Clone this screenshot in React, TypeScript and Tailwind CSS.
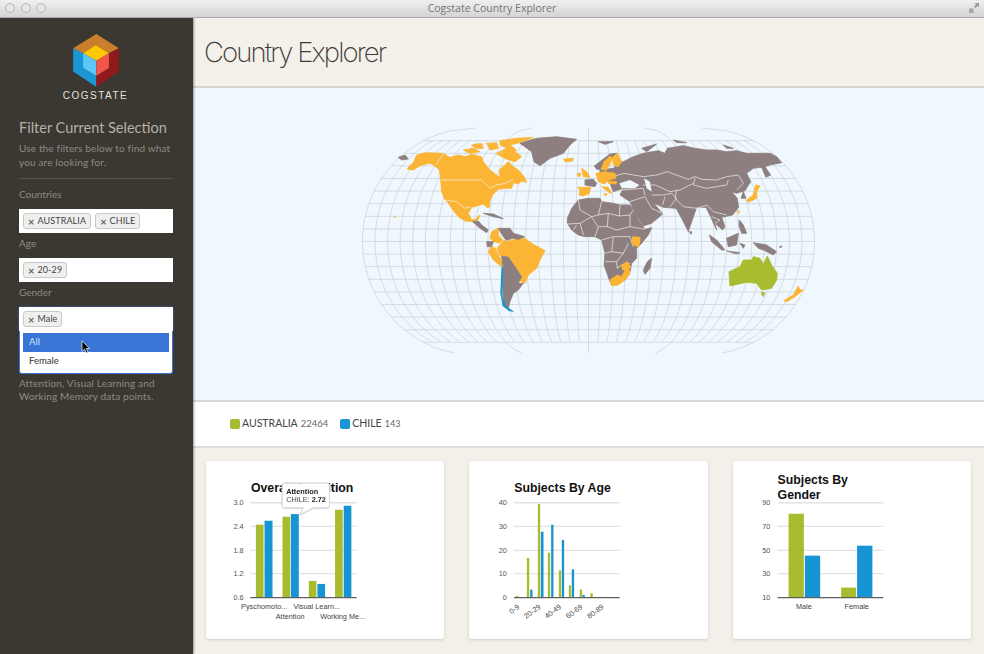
import React from "react";

const GREY = "#8d7f7f";
const ORANGE = "#fbb434";
const GREEN = "#a9bb2f";
const BLUE = "#1795d2";
const MAP_BG = "#f0f8fe";

const AMERICA_ORANGE = [
  "172,148 178,138 190,128 200,105 225,98 278,100 300,112 325,105 345,110 365,103 395,110 400,125 410,138 420,150 440,165 450,172 448,150 465,135 475,125 490,140 505,150 522,170 530,187 515,183 505,192 490,188 485,205 465,205 445,208 430,222 420,240 418,262 410,262 400,252 375,260 365,262 355,280 365,300 378,296 390,285 385,298 370,305 345,303 325,290 310,272 295,250 285,240 275,215 272,180 268,150 255,138 240,130 215,135 190,150",
  "340,90 370,85 390,95 360,100",
  "365,75 395,70 400,85 375,85",
  "410,70 440,68 445,85 420,90",
  "450,62 500,55 550,52 510,68 480,75 500,90 490,100 460,95 440,100 470,85 450,75",
  "440,102 490,92 515,110 495,125 470,118",
  "640,118 670,115 668,123 645,125",
  "425,335 445,325 445,345 460,360 450,370 430,365 420,355",
  "425,378 440,385 445,405 460,430 452,438 430,420 415,395",
  "460,362 490,358 525,355 545,370 585,392 570,420 560,445 535,465 525,490 505,480 515,465 495,440 470,410 445,405 440,385",
  "132,290 136,290 134,293",
];

const AMERICA_GREY = [
  "510,70 535,62 560,55 620,50 680,58 660,75 640,100 600,115 570,137 552,125 545,95",
  "145,112 165,105 175,117 155,120",
  "400,280 430,282 460,296 430,290",
  "368,305 385,303 395,315 415,330 410,338 390,325",
  "445,325 480,325 490,340 525,350 505,358 490,355 470,362 460,350",
  "410,365 430,365 425,380 412,380",
  "455,408 475,412 495,440 515,470 505,490 520,490 505,510 490,520 480,545 475,565 462,560 459,530 459,480 459,440",
];

const AMERICA_LINES = [
  "280,100 258,135",
  "272,180 395,180 420,205 440,195 465,190 490,178",
  "285,240 320,245 345,265 360,260",
  "445,345 460,360 450,370 440,385 445,405",
  "425,378 440,385",
  "288,245 300,262 310,280",
  "470,362 490,358",
];

const AFRICA_GREY =
  "112,265 125,235 145,210 175,205 210,205 215,215 250,220 270,225 300,225 310,240 325,270 345,298 365,293 355,315 335,340 320,355 320,385 305,400 300,425 285,450 245,465 238,450 222,405 225,370 215,330 195,320 165,320 145,315 125,300 112,280";

const AFRICA_LINES = [
  "145,210 150,240 185,260 205,255 215,215",
  "112,282 150,280 185,260",
  "205,255 235,250 232,290 205,290 185,262",
  "235,250 268,258 270,225",
  "268,258 300,255 310,240",
  "232,290 260,300 300,290 300,255",
  "150,280 160,315",
  "130,300 140,285",
  "205,290 195,320",
  "215,330 250,320 300,320",
  "250,320 245,365 225,370",
  "300,320 310,350",
  "245,365 280,370 295,340",
  "225,395 260,395 262,415 275,405 300,400",
  "260,395 280,370",
  "300,290 345,298",
];

const AFRICA_ORANGE = [
  "308,320 330,322 330,335 325,352 305,340",
  "240,450 262,435 275,440 283,425 298,420 300,432 285,450 265,465 245,467",
  "275,405 292,395 302,410 290,425 277,418",
  "143,172 182,172 178,190 160,198 147,195 150,180",
  "155,115 170,125 180,142 160,140",
  "143,130 153,130 150,140 143,138",
  "215,115 222,95 240,78 248,85 238,105 228,122",
  "248,82 262,70 275,95 265,110 250,105",
  "198,130 222,125 255,130 258,145 232,150 225,162 205,155",
  "215,170 235,172 245,190 238,188 225,178",
  "232,152 260,155 258,162 235,160",
  "222,190 232,192 226,198",
];

const AFRICA_EXTRA_GREY = [
  "352,395 365,385 360,415 345,433 340,420",
  "165,150 190,148 200,160 195,170 165,165",
  "193,108 240,72 262,70 248,82 222,100 212,118 200,118",
];

const ASIA_GREY = [
  "130,125 160,110 190,100 235,92 255,100 262,85 310,77 345,85 380,90 410,90 440,95 470,92 500,100 570,100 590,110 605,128 570,135 555,140 572,165 558,172 545,142 520,145 500,160 512,185 495,212 470,220 455,215 472,235 476,262 458,285 425,292 435,320 428,330 405,310 410,330 392,290 378,262 350,262 330,320 325,335 305,295 288,265 250,262 222,250 248,282 215,310 190,318 165,280 150,245 120,225 130,205 100,215 88,185 60,165 60,150 100,145 115,130",
  "490,215 498,235 483,235",
  "478,300 490,315 500,340 485,340 477,315",
  "388,345 410,360 435,390 425,390 395,365",
  "440,393 480,398 470,402",
  "440,355 475,340 470,375 445,380",
  "480,370 495,375 490,385",
  "520,368 560,375 590,395 580,405 550,390 535,385",
  "55,65 100,65 75,73",
  "185,85 230,72 200,95",
  "280,60 320,68 290,68",
  "430,75 460,85 440,85",
  "328,335 335,335 334,343",
  "598,380 606,378 602,384",
];

const ASIA_SEA = [
  "118,190 150,180 178,195 165,205 125,205",
  "192,175 210,185 215,215 200,205",
];

const ASIA_LINES = [
  "130,160 190,170 230,165 262,155 325,178 345,170 365,178 410,180 440,170 475,165 490,190 470,210",
  "345,175 340,195 380,205 440,195 445,180",
  "190,195 225,195 270,215 300,210 330,195 340,190",
  "290,210 285,235 310,260 350,265 380,255 400,275 440,285",
  "215,225 250,225 275,220 290,235 270,260",
  "248,255 255,230",
  "150,245 195,230 215,265 245,280",
  "395,290 420,300 405,310",
  "100,170 130,160",
  "125,210 190,205 195,225",
];

const ASIA_ORANGE = [
  "527,195 540,198 530,215 530,235 505,247 500,240 520,225",
  "473,272 478,272 476,281",
  "612,542 640,525 655,498 660,510 670,510 645,530 620,545",
];

const AUSTRALIA =
  "447,455 480,440 490,420 515,420 520,410 540,415 550,432 562,408 575,435 592,460 590,480 575,505 545,510 530,490 500,487 450,498";

const CX = 588.5;
const CY = 241.5;
const HALF_W = 226;
const POLE = 113.5;

const edge = (y: number) => {
  const t = (y - CY) / POLE;
  return HALF_W * (0.5 + 0.5 * Math.sqrt(Math.max(0, 1 - t * t)));
};

const graticule = () => {
  const lines: string[] = [];
  for (let k = -8; k <= 8; k++) {
    const y = CY + k * 12.6;
    lines.push(`M${CX - edge(y)} ${y}L${CX + edge(y)} ${y}`);
  }
  for (let k = -18; k <= 18; k++) {
    const reach = k % 9 === 0 ? POLE : 100.8;
    let d = "";
    for (let dy = -reach; dy <= reach + 0.01; dy += 3) {
      const y = CY + dy;
      d += `${d ? "L" : "M"}${CX + (k / 18) * edge(y)} ${y}`;
    }
    lines.push(d);
  }
  return lines.join("");
};

const Land = ({ items, color }: { items: string[]; color: string }) => (
  <>
    {items.map((p) => (
      <polygon
        key={p}
        points={p}
        fill={color}
        stroke={color}
        strokeWidth="2.5"
        strokeLinejoin="round"
      />
    ))}
  </>
);

const Borders = ({ items }: { items: string[] }) => (
  <>
    {items.map((p) => (
      <polyline
        key={p}
        points={p}
        fill="none"
        stroke="#f4f4f4"
        strokeWidth="2"
        strokeLinejoin="round"
      />
    ))}
  </>
);

const WorldMap = () => (
  <svg viewBox="193 88 791 312" className="block w-[791px] h-[312px]">
    <path d={graticule()} fill="none" stroke="#c8d3da" strokeWidth="0.75" />
    <g transform="translate(350 120) scale(0.3333)">
      <Land items={AMERICA_ORANGE} color={ORANGE} />
      <Land items={AMERICA_GREY} color={GREY} />
      <polygon
        points="455,435 459,445 459,490 457,530 470,560 493,575 478,574 458,558 451,520 453,470"
        fill={BLUE}
      />
      <Borders items={AMERICA_LINES} />
    </g>
    <g transform="translate(580 120) scale(0.3333)">
      <Land items={ASIA_GREY} color={GREY} />
      {ASIA_SEA.map((p) => (
        <polygon key={p} points={p} fill={MAP_BG} />
      ))}
      <Borders items={ASIA_LINES} />
      <Land items={ASIA_ORANGE} color={ORANGE} />
      <Land items={[AUSTRALIA, "543,518 555,518 550,530"]} color={GREEN} />
    </g>
    <g transform="translate(530 130) scale(0.3333)">
      <Land items={[AFRICA_GREY, ...AFRICA_EXTRA_GREY]} color={GREY} />
      <Borders items={AFRICA_LINES} />
      <Land items={AFRICA_ORANGE} color={ORANGE} />
    </g>
  </svg>
);

const Logo = () => (
  <svg viewBox="217 102 138 160" className="block w-[46px] h-[53px]">
    <polygon points="287,102 355,145 325,160 285,135 247,160 217,145" fill="#c97f2b" />
    <polygon points="217,145 247,160 247,205 287,228 287,262 217,215" fill="#1b96d4" />
    <polygon points="355,145 355,215 287,262 287,228 325,205 325,160" fill="#8e1a1c" />
    <polygon points="247,160 285,135 325,160 287,183" fill="#ffc805" />
    <polygon points="247,160 287,183 287,228 247,205" fill="#5cc8f8" />
    <polygon points="287,183 325,160 325,205 287,228" fill="#f2554a" />
  </svg>
);

const Tag = ({ label }: { label: string }) => (
  <span className="flex items-center h-[16px] px-[4px] gap-[3px] rounded-[3px] border border-[#c8c8c8] bg-[#efefef] text-[9px] tracking-[0.1px] text-[#444]">
    <span className="text-[11px] font-bold leading-none text-[#666]">×</span>
    {label}
  </span>
);

const TagBox = ({ tags }: { tags: string[] }) => (
  <div className="flex items-center gap-[4px] h-[24px] px-[4px] bg-white">
    {tags.map((t) => (
      <Tag key={t} label={t} />
    ))}
  </div>
);

const Cursor = () => (
  <svg viewBox="0 0 10 14" className="absolute left-[58px] top-[7px] w-[10px] h-[14px]">
    <path
      d="M1 .8V11.4L3.6 9.2 5.3 13 7 12.2 5.3 8.5H8.6Z"
      fill="#000"
      stroke="#fff"
      strokeWidth=".7"
    />
  </svg>
);

const Sidebar = () => (
  <aside className="w-[193px] shrink-0 bg-[#3b3731] pl-[19px] pr-[20px] pt-[16px] shadow-[1px_0_2px_rgba(0,0,0,0.4)] z-10 font-['Lato',sans-serif]">
    <div className="flex flex-col items-center pr-[1px]">
      <Logo />
      <div className="mt-[3px] text-[10px] leading-[12px] tracking-[1.5px] text-[#e3e1dd] font-['Liberation_Sans',sans-serif]">
        COGSTATE
      </div>
    </div>
    <h1 className="mt-[16px] text-[14.5px] leading-[20px] whitespace-nowrap text-[#b5b1a8]">
      Filter Current Selection
    </h1>
    <p className="mt-[4px] text-[10px] leading-[13.5px] text-[#8f8b83] tracking-[0.15px]">
      Use the filters below to find what you are looking for.
    </p>
    <div className="mt-[9px] h-px bg-[#57534c]" />
    <div className="mt-[9px] text-[10px] leading-[13px] text-[#8f8b83]">Countries</div>
    <div className="mt-[8px]">
      <TagBox tags={["AUSTRALIA", "CHILE"]} />
    </div>
    <div className="mt-[4px] text-[10px] leading-[13px] text-[#8f8b83]">Age</div>
    <div className="mt-[8px]">
      <TagBox tags={["20-29"]} />
    </div>
    <div className="mt-[4px] text-[10px] leading-[13px] text-[#8f8b83]">Gender</div>
    <div className="relative mt-[8px] shadow-[0_0_2px_#3875d7]">
      <TagBox tags={["Male"]} />
      <div className="absolute left-0 right-0 top-[24px] z-10 h-[43px] bg-white rounded-b-[3px] border border-t-0 border-[#3875d7] px-[3px] pt-[2px] text-[9.5px] text-[#444]">
        <div className="relative flex items-center h-[19px] px-[6px] bg-[#3875d7] text-[#cfe0f8]">
          All
          <Cursor />
        </div>
        <div className="flex items-center h-[19px] px-[6px] font-medium">Female</div>
      </div>
    </div>
    <p className="mt-[46px] text-[10px] leading-[13.3px] text-[#8f8b83] tracking-[0.15px]">
      Attention, Visual Learning and
      <br />
      Working Memory data points.
    </p>
  </aside>
);

type Bar = { x0: number; x1: number; top: number; color: string };

type ChartProps = {
  viewX: number;
  gridX0: number;
  gridX1: number;
  labelX: number;
  titleX: number;
  title: string[];
  titleY: number;
  yLabels: string[];
  bars: Bar[];
  xLabels: { text: string; x: number; y: number; rotate?: boolean }[];
  children?: React.ReactNode;
};

const GRID_Y = [142, 213, 285, 355];
const BASE_Y = 427;

const bar = (x0: number, x1: number, top: number, color: string): Bar => ({ x0, x1, top, color });

// all chart numbers are in a 3x coordinate space, same as the crops they were read from
const Chart = ({
  viewX,
  gridX0,
  gridX1,
  labelX,
  titleX,
  title,
  titleY,
  yLabels,
  bars,
  xLabels,
  children,
}: ChartProps) => (
  <div className="h-[178px] bg-white rounded-[3px] shadow-[0_1px_3px_rgba(0,0,0,0.16)] overflow-hidden">
    <svg
      viewBox={`${viewX} 17 717 534`}
      className="block w-full h-full font-['Liberation_Sans',sans-serif]"
    >
      {GRID_Y.map((y) => (
        <line key={y} x1={gridX0} x2={gridX1} y1={y} y2={y} stroke="#e2e2e2" strokeWidth="4" />
      ))}
      {bars.map((b) => (
        <rect
          key={`${b.x0}-${b.top}`}
          x={b.x0}
          y={b.top}
          width={b.x1 - b.x0}
          height={BASE_Y - b.top}
          fill={b.color}
        />
      ))}
      <line x1={gridX0} x2={gridX1} y1={BASE_Y} y2={BASE_Y} stroke="#5f5f5f" strokeWidth="4" />
      {yLabels.map((l, i) => (
        <text key={l} x={labelX} y={[150, 221, 293, 363, 435][i]} textAnchor="end" fontSize="22" fill="#555">
          {l}
        </text>
      ))}
      {xLabels.map((l) => (
        <text
          key={l.text}
          x={l.x}
          y={l.y}
          fontSize="22"
          fill="#444"
          textAnchor={l.rotate ? "end" : "middle"}
          transform={l.rotate ? `rotate(-37 ${l.x} ${l.y})` : undefined}
        >
          {l.text}
        </text>
      ))}
      {title.map((t, i) => (
        <text key={t} x={titleX} y={titleY + i * 43} fontSize="37" fontWeight="700" fill="#111">
          {t}
        </text>
      ))}
      {children}
    </svg>
  </div>
);

const Tooltip = () => (
  <g className="drop-shadow-[0_1px_2px_rgba(0,0,0,0.25)]">
    <path
      d="M252 83H382Q388 83 388 89V151Q388 157 382 157H340L300 177 310 157H252Q246 157 246 151V89Q246 83 252 83Z"
      fill="#fff"
      stroke="#d9d9d9"
      strokeWidth="3"
    />
    <text x="258" y="115" fontSize="22" fontWeight="700" fill="#222">
      Attention
    </text>
    <text x="258" y="140" fontSize="22" fill="#444">
      CHILE: <tspan fontWeight="700" fill="#222">2.72</tspan>
    </text>
  </g>
);

const Cards = () => (
  <div className="flex-1 bg-[#f3efe9] border-t-2 border-[#dfdcd7] grid grid-cols-3 gap-x-[25px] pl-[12.5px] pr-[13px] pt-[13px]">
    <Chart
      viewX={17}
      gridX0={150}
      gridX1={470}
      labelX={130}
      titleX={152}
      titleY={110}
      title={["Overall Cognition"]}
      yLabels={["3.0", "2.4", "1.8", "1.2", "0.6"]}
      bars={[
        bar(167, 190, 208, GREEN),
        bar(193, 217, 196, BLUE),
        bar(247, 270, 184, GREEN),
        bar(272, 296, 176, BLUE),
        bar(326, 349, 377, GREEN),
        bar(352, 375, 386, BLUE),
        bar(405, 428, 163, GREEN),
        bar(431, 454, 151, BLUE),
      ]}
      xLabels={[
        { text: "Pyschomoto...", x: 192, y: 461 },
        { text: "Attention", x: 270, y: 490 },
        { text: "Visual Learn...", x: 350, y: 461 },
        { text: "Working Me...", x: 428, y: 490 },
      ]}
    >
      <Tooltip />
    </Chart>
    <Chart
      viewX={12}
      gridX0={147}
      gridX1={465}
      labelX={126}
      titleX={148}
      titleY={110}
      title={["Subjects By Age"]}
      yLabels={["40", "30", "20", "10", "0"]}
      bars={[
        bar(153, 160, 422, GREEN),
        bar(186, 193, 308, GREEN),
        bar(219, 226, 146, GREEN),
        bar(249, 256, 292, GREEN),
        bar(282, 289, 345, GREEN),
        bar(312, 319, 390, GREEN),
        bar(345, 352, 403, GREEN),
        bar(377, 384, 414, GREEN),
        bar(408, 414, 425, GREEN),
        bar(196, 203, 403, BLUE),
        bar(228, 236, 229, BLUE),
        bar(259, 266, 208, BLUE),
        bar(291, 298, 254, BLUE),
        bar(321, 328, 342, BLUE),
        bar(353, 360, 419, BLUE),
      ]}
      xLabels={[
        { text: "0-9", x: 165, y: 458, rotate: true },
        { text: "20-29", x: 229, y: 458, rotate: true },
        { text: "40-49", x: 291, y: 458, rotate: true },
        { text: "60-69", x: 355, y: 458, rotate: true },
        { text: "80-89", x: 419, y: 458, rotate: true },
      ]}
    />
    <Chart
      viewX={24}
      gridX0={158}
      gridX1={476}
      labelX={136}
      titleX={158}
      titleY={87}
      title={["Subjects By", "Gender"]}
      yLabels={["90", "70", "50", "30", "10"]}
      bars={[
        bar(191, 237, 175, GREEN),
        bar(240, 286, 301, BLUE),
        bar(349, 394, 397, GREEN),
        bar(397, 443, 271, BLUE),
      ]}
      xLabels={[
        { text: "Male", x: 237, y: 461 },
        { text: "Female", x: 396, y: 461 },
      ]}
    />
  </div>
);

const TitleBar = () => (
  <div className="relative flex items-center justify-center h-[18px] shrink-0 bg-gradient-to-b from-[#f0f0f0] to-[#d4d4d4] border-b border-[#a9a9a9] z-20">
    <div className="absolute left-[5px] top-[3px] flex gap-[5.5px]">
      <span className="w-[10px] h-[10px] rounded-full border border-[#b5b5b5] bg-[#e6e6e6]" />
      <span className="w-[10px] h-[10px] rounded-full border border-[#b5b5b5] bg-[#e6e6e6]" />
      <span className="w-[10px] h-[10px] rounded-full border border-[#b5b5b5] bg-[#e6e6e6]" />
    </div>
    <span className="text-[10.5px] text-[#757575] font-['Open_Sans',sans-serif]">
      Cogstate Country Explorer
    </span>
    <svg viewBox="0 0 12 12" className="absolute right-[4px] top-[2px] w-[12px] h-[12px]">
      <path d="M6.5 1H11V5.5L9.5 4 7.5 6 6 4.5 8 2.5Z" fill="#9a9a9a" />
      <path d="M1 6.5V11H5.5V6.5Z" fill="#a8a8a8" />
    </svg>
  </div>
);

const Legend = () => (
  <div className="flex items-center h-[46px] shrink-0 pl-[37px] bg-white border-t-2 border-[#d9d9d9] font-['Lato',sans-serif]">
    <span className="w-[10px] h-[10px] rounded-[2px] bg-[#a9bb2f]" />
    <span className="ml-[2px] text-[10.5px] text-[#444]">AUSTRALIA</span>
    <span className="ml-[3px] text-[9.5px] text-[#666]">22464</span>
    <span className="ml-[12px] w-[10px] h-[10px] rounded-[2px] bg-[#1795d2]" />
    <span className="ml-[2px] text-[10.5px] text-[#444]">CHILE</span>
    <span className="ml-[3px] text-[9px] text-[#666]">143</span>
  </div>
);

export default function App() {
  return (
    <div className="flex flex-col w-[984px] h-[654px] overflow-hidden">
      <TitleBar />
      <div className="flex flex-1 min-h-0">
        <Sidebar />
        <main className="flex flex-col flex-1 min-w-0">
          <header className="flex items-center h-[70px] shrink-0 pl-[11px] pt-[2px] bg-[#f4f0ea] border-b-2 border-[#d6d3ce]">
            <h2 className="text-[27.5px] font-extralight tracking-[-1.9px] text-[#3f3b38] font-['Inter',sans-serif]">
              Country Explorer
            </h2>
          </header>
          <div className="h-[312px] shrink-0 bg-[#f0f8fe]">
            <WorldMap />
          </div>
          <Legend />
          <Cards />
        </main>
      </div>
    </div>
  );
}
